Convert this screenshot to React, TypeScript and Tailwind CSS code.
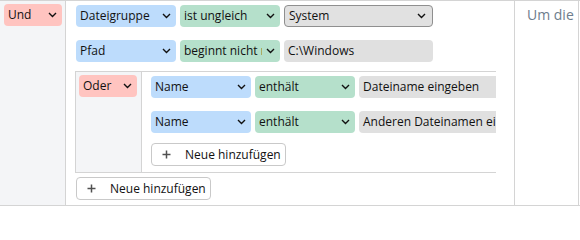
import React from "react";

const font = { fontFamily: '"Segoe UI", "Open Sans", "Noto Sans", sans-serif' };

const Chevron = () => (
  <svg width="9" height="6" viewBox="0 0 9 6" className="shrink-0">
    <polyline points="1,1 4.5,4.5 8,1" fill="none" stroke="#111" strokeWidth="1.4" />
  </svg>
);

const Plus = () => (
  <svg width="9" height="9" viewBox="0 0 9 9" className="shrink-0">
    <path d="M4.5 0.5v8M0.5 4.5h8" stroke="#505050" strokeWidth="1.5" />
  </svg>
);

type Tone = "pink" | "blue" | "green";

const toneClass: Record<Tone, string> = {
  pink: "bg-[#ffc4c0]",
  blue: "bg-[#bddcfc]",
  green: "bg-[#b5e0cb]",
};

const Select = ({ label, tone, w = "w-[100px]" }: { label: string; tone: Tone; w?: string }) => (
  <div className={`${w} h-[22px] shrink-0 rounded-[4px] ${toneClass[tone]} flex items-center pl-1 pr-[5px] gap-1`}>
    <span className="flex-1 overflow-hidden whitespace-nowrap">{label}</span>
    <Chevron />
  </div>
);

const TextInput = ({ value, w = "w-[149px]" }: { value: string; w?: string }) => (
  <div className={`${w} h-[22px] shrink-0 rounded-[4px] bg-[#e0e0e0] flex items-center px-1 overflow-hidden whitespace-nowrap`}>
    {value}
  </div>
);

const AddButton = () => (
  <button className="w-[135px] h-[23px] rounded-[4px] border border-[#c9c9c9] bg-white flex items-center pl-[10px] gap-[14px] text-[#111]">
    <Plus />
    <span>Neue hinzufügen</span>
  </button>
);

export default function App() {
  return (
    <div className="w-[580px] h-[207px] bg-white text-[12px] text-[#111] overflow-hidden" style={font}>
      <div className="flex h-[206px] border-t border-b border-[#d4d4d4]">
        {/* root operator */}
        <div className="w-[66px] shrink-0 bg-[#f4f5f7] border-r border-[#d4d4d4] pl-1 pt-[3px]">
          <Select label="Und" tone="pink" w="w-[58px]" />
        </div>

        {/* conditions */}
        <div className="w-[448px] shrink-0 pl-[9px]">
          <div className="w-[421px] overflow-hidden pt-[4px]">
            <div className="flex gap-1 ml-px">
              <Select label="Dateigruppe" tone="blue" />
              <Select label="ist ungleich" tone="green" />
              <div className="w-[149px] h-[22px] rounded-[4px] bg-[#e1e1e1] border border-[#8f8f8f] flex items-center pl-1 pr-[6px] justify-between">
                <span>System</span>
                <Chevron />
              </div>
            </div>

            <div className="flex gap-1 ml-px mt-[13px]">
              <Select label="Pfad" tone="blue" />
              <Select label="beginnt nicht mit" tone="green" />
              <TextInput value="C:\Windows" />
            </div>

            {/* nested group */}
            <div className="flex w-[480px] mt-[9px] border-t border-l border-b border-[#d4d4d4]">
              <div className="w-[66px] shrink-0 bg-[#f4f5f7] border-r border-[#d4d4d4] pl-[3px] pt-[3px]">
                <Select label="Oder" tone="pink" w="w-[58px]" />
              </div>
              <div className="flex-1 pl-[9px] pt-[4px] pb-[6px]">
                <div className="flex gap-1">
                  <Select label="Name" tone="blue" />
                  <Select label="enthält" tone="green" />
                  <TextInput value="Dateiname eingeben" w="w-[160px]" />
                </div>
                <div className="flex gap-1 mt-[13px]">
                  <Select label="Name" tone="blue" />
                  <Select label="enthält" tone="green" />
                  <TextInput value="Anderen Dateinamen eingeben" w="w-[160px]" />
                </div>
                <div className="mt-[10px]">
                  <AddButton />
                </div>
              </div>
            </div>

            <div className="ml-px mt-[4px]">
              <AddButton />
            </div>
          </div>
        </div>

        {/* description panel */}
        <div className="w-[65px] shrink-0 border-l border-r border-[#d4d4d4] pl-3 pt-[3px] overflow-hidden whitespace-nowrap text-[14px] text-[#6e7d8c]">
          Um die <span className="text-[#e8c547]">Regel</span>
        </div>
      </div>
    </div>
  );
}
